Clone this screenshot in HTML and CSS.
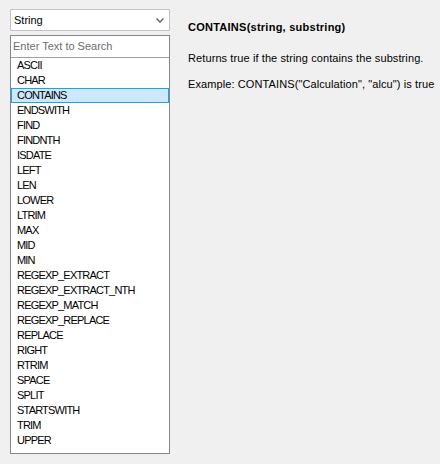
FILE: index.html
```html
<!DOCTYPE html>
<html>
<head>
<meta charset="utf-8">
<link rel="stylesheet" href="styles.css">
</head>
<body>
<div class="page">
  <div class="left">
    <div class="select">
      <span class="select-text">String</span>
      <svg class="chev" width="8" height="5" viewBox="0 0 8 5"><path d="M0.5 0.5 L4 4 L7.5 0.5" fill="none" stroke="#606060" stroke-width="1.4"/></svg>
    </div>
    <div class="listbox">
      <div class="search">Enter Text to Search</div>
      <ul class="list">
        <li>ASCII</li>
        <li>CHAR</li>
        <li class="sel">CONTAINS</li>
        <li>ENDSWITH</li>
        <li>FIND</li>
        <li>FINDNTH</li>
        <li>ISDATE</li>
        <li>LEFT</li>
        <li>LEN</li>
        <li>LOWER</li>
        <li>LTRIM</li>
        <li>MAX</li>
        <li>MID</li>
        <li>MIN</li>
        <li>REGEXP_EXTRACT</li>
        <li>REGEXP_EXTRACT_NTH</li>
        <li>REGEXP_MATCH</li>
        <li>REGEXP_REPLACE</li>
        <li>REPLACE</li>
        <li>RIGHT</li>
        <li>RTRIM</li>
        <li>SPACE</li>
        <li>SPLIT</li>
        <li>STARTSWITH</li>
        <li>TRIM</li>
        <li>UPPER</li>
      </ul>
    </div>
  </div>
  <div class="right">
    <div class="title">CONTAINS(string, substring)</div>
    <p class="desc first">Returns true if the string contains the substring.</p>
    <p class="desc">Example: CONTAINS("Calculation", "alcu") is true</p>
  </div>
</div>
</body>
</html>
```
FILE: styles.css
```css
html, body {
  margin: 0;
  padding: 0;
  background: #f0f0f0;
}
body {
  font-family: "Liberation Sans", Arial, sans-serif;
  font-size: 11px;
  color: #000;
  width: 440px;
  height: 464px;
  overflow: hidden;
}
.page {
  display: flex;
  padding: 9px 0 0 10px;
}
.left {
  width: 160px;
  display: flex;
  flex-direction: column;
  gap: 4px;
}
.select {
  box-sizing: border-box;
  height: 22px;
  border: 1px solid #c4c4c4;
  background: #fff;
  display: flex;
  align-items: center;
  justify-content: space-between;
  padding: 0 5px 0 3px;
}
.chev {
  display: block;
}
.listbox {
  box-sizing: border-box;
  border: 1px solid #828790;
  background: #fff;
  height: 419px;
}
.search {
  height: 21px;
  line-height: 21px;
  padding-left: 2px;
  color: #6d6d6d;
  border-bottom: 1px solid #a0a0a0;
}
.list {
  list-style: none;
  margin: 0;
  padding: 0;
  font-size: 11px;
  letter-spacing: -0.8px;
}
.list li {
  box-sizing: border-box;
  height: 15px;
  line-height: 13px;
  padding-left: 5px;
  border: 1px solid transparent;
  white-space: nowrap;
}
.list li.sel {
  background: #cce8ff;
  border-color: #26a0da;
}
.right {
  padding: 9px 0 0 18px;
}
.title {
  font-weight: bold;
  line-height: 18px;
  letter-spacing: 0.25px;
}
.desc {
  margin: 8px 0 0 0;
  line-height: 18px;
  letter-spacing: 0.1px;
}
.desc.first {
  margin-top: 13px;
}
```
